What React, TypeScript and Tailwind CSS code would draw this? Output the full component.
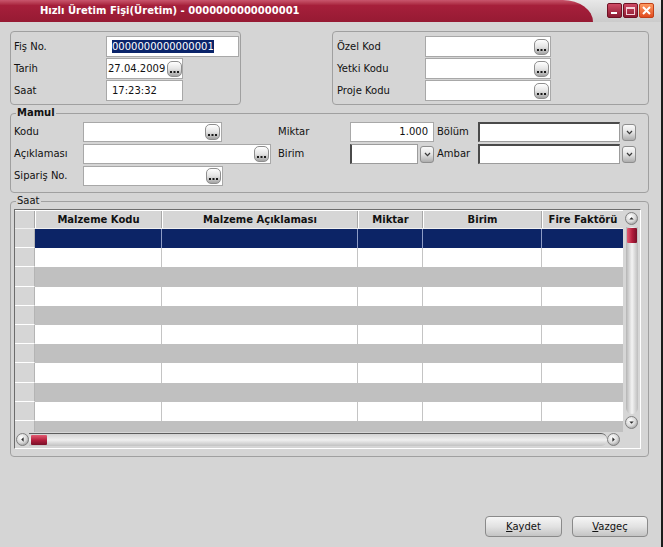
import React from "react";

function Dots() {
  return (
    <span className="flex h-[16px] w-[15px] shrink-0 items-end justify-center rounded-[5px] border border-[#8e8e8e] bg-linear-to-b from-[#ffffff] via-[#e4e4e4] to-[#a4a4a4] pb-[3px]">
      <svg width="9" height="2" viewBox="0 0 9 2">
        <rect x="0" y="0" width="2" height="2" fill="#1a1a1a" />
        <rect x="3.5" y="0" width="2" height="2" fill="#1a1a1a" />
        <rect x="7" y="0" width="2" height="2" fill="#1a1a1a" />
      </svg>
    </span>
  );
}

function Drop() {
  return (
    <span className="flex h-[17px] w-[14px] shrink-0 items-center justify-center rounded-[3px] border border-[#8e8e8e] bg-linear-to-b from-[#fafafa] via-[#e2e2e2] to-[#adadad]">
      <svg width="7" height="5" viewBox="0 0 7 5">
        <path d="M1 1 L3.5 3.6 L6 1" stroke="#3a3a3a" strokeWidth="1.3" fill="none" />
      </svg>
    </span>
  );
}

function CircleArrow({ dir }: { dir: "up" | "down" | "left" | "right" }) {
  const tri: Record<string, string> = {
    up: "M4.3 7.6 L6.5 5.2 L8.7 7.6 Z",
    down: "M4.3 5.4 L6.5 7.8 L8.7 5.4 Z",
    left: "M7.6 4.3 L5.2 6.5 L7.6 8.7 Z",
    right: "M5.4 4.3 L7.8 6.5 L5.4 8.7 Z",
  };
  return (
    <svg width="13" height="13" viewBox="0 0 13 13" className="shrink-0">
      <defs>
        <radialGradient id="cg" cx="0.4" cy="0.35" r="0.7">
          <stop offset="0" stopColor="#ffffff" />
          <stop offset="0.6" stopColor="#d8d8d8" />
          <stop offset="1" stopColor="#9a9a9a" />
        </radialGradient>
      </defs>
      <circle cx="6.5" cy="6.5" r="6" fill="url(#cg)" stroke="#808080" strokeWidth="1" />
      <path d={tri[dir]} fill="#2a2a2a" />
    </svg>
  );
}

const headers = ["Malzeme Kodu", "Malzeme Açıklaması", "Miktar", "Birim", "Fire Faktörü"];
const colW = ["w-[127px]", "w-[196px]", "w-[65px]", "w-[119px]", "w-[81px]"];

function GridRow({ i }: { i: number }) {
  const kind = i === 0 ? "sel" : i % 2 === 1 ? "white" : "gray";
  const bg = kind === "sel" ? "bg-[#0c2466]" : kind === "white" ? "bg-white" : "bg-[#c0c0c0]";
  const line =
    kind === "sel" ? "border-[#8d9cc6]" : kind === "white" ? "border-[#c4c4c4]" : "border-[#c0c0c0]";
  return (
    <div className="flex h-[19.2px] shrink-0">
      <div className="w-[20px] shrink-0 border-r border-b border-r-[#b4b4b4] border-b-white bg-[#d6d6d6]" />
      {colW.map((w, k) => (
        <div key={k} className={`${w} shrink-0 ${bg} ${k < 4 ? "border-r" : ""} ${line}`} />
      ))}
    </div>
  );
}

export default function App() {
  return (
    <div className="flex h-[547px] w-[663px] flex-col overflow-hidden border-r-2 border-[#1c1c1c] bg-[#d5d5d5] font-['DejaVu_Sans',sans-serif] text-[10px] leading-[12px] text-[#111]">
      {/* Title bar */}
      <div className="flex h-[22px] shrink-0 bg-linear-to-b from-[#e8e8e8] to-[#cbcbcb]">
        <div className="flex w-[593px] items-center rounded-tr-[30px_22px] bg-linear-to-b from-[#c9556d] from-0% via-[#a61f3b] via-25% to-[#961a33] pl-[40px] font-bold text-white">
          Hızlı Üretim Fişi(Üretim) - 0000000000000001
        </div>
        <div className="flex flex-1 items-start justify-end gap-[1px] pt-[3px] pr-[7px]">
          <div className="flex h-[15px] w-[15px] items-end rounded-[2px] border border-[#6e1224] bg-linear-to-b from-[#cf4a64] to-[#8c1a32] pb-[3px] pl-[3px]">
            <div className="h-[2px] w-[6px] bg-white" />
          </div>
          <div className="flex h-[15px] w-[15px] items-center justify-center rounded-[2px] border border-[#6e1224] bg-linear-to-b from-[#cf4a64] to-[#8c1a32]">
            <div className="h-[8px] w-[9px] border border-t-2 border-[#f4d0d8]" />
          </div>
          <div className="flex h-[15px] w-[15px] items-center justify-center rounded-[2px] border border-[#c04018] bg-linear-to-b from-[#ff9a60] to-[#e04a1c]">
            <svg width="9" height="9" viewBox="0 0 9 9">
              <path d="M1 1 L8 8 M8 1 L1 8" stroke="#fff" strokeWidth="2" />
            </svg>
          </div>
        </div>
      </div>

      {/* Body */}
      <div className="flex flex-1 flex-col pr-[12px] pl-[10px]">
        {/* Top boxes */}
        <div className="mt-[9px] flex h-[74px] justify-between">
          <div className="flex h-[74px] w-[231px] flex-col gap-[1px] rounded-[4px] border border-[#a0a0a0] pt-[4px] pl-[3px]">
            <div className="flex h-[21px] items-center">
              <span className="w-[92px]">Fiş No.</span>
              <div className="flex h-[21px] w-[133px] items-center border border-[#a8a8a8] bg-white pl-[5px]">
                <span className="inline-block bg-[#0a246a] leading-[13px] text-white">0000000000000001</span>
              </div>
            </div>
            <div className="flex h-[21px] items-center">
              <span className="w-[92px]">Tarih</span>
              <div className="flex h-[21px] w-[77px] items-center justify-between border border-[#a8a8a8] bg-white pr-[0px] pl-[1px]">
                <span>27.04.2009</span>
                <Dots />
              </div>
            </div>
            <div className="flex h-[21px] items-center">
              <span className="w-[92px]">Saat</span>
              <div className="flex h-[21px] w-[77px] items-center border border-[#a8a8a8] bg-white pl-[5px]">
                <span>17:23:32</span>
              </div>
            </div>
          </div>

          <div className="flex h-[74px] w-[317px] flex-col gap-[1px] rounded-[4px] border border-[#a0a0a0] pt-[4px] pl-[4px]">
            {["Özel Kod", "Yetki Kodu", "Proje Kodu"].map((l) => (
              <div key={l} className="flex h-[21px] items-center">
                <span className="w-[88px]">{l}</span>
                <div className="flex h-[21px] w-[126px] items-center justify-end border border-[#a8a8a8] bg-white pr-[1px]">
                  <Dots />
                </div>
              </div>
            ))}
          </div>
        </div>

        {/* Mamul */}
        <fieldset className="mt-[2px] h-[86px] rounded-[4px] border border-[#a0a0a0]">
          <legend className="ml-[5px] px-[1px] leading-[12px] font-bold">Mamul</legend>
          <div className="mt-[3px] grid grid-cols-[69px_195px_72px_87px_41px_159px] grid-rows-[20px_20px_20px] items-center gap-y-[2px] pl-[3px]">
            <span>Kodu</span>
            <div className="flex h-[20px] w-[139px] items-center justify-end border border-[#a8a8a8] bg-white pr-[1px]">
              <Dots />
            </div>
            <span>Miktar</span>
            <div className="flex h-[20px] w-[84px] items-center justify-end border border-[#a8a8a8] bg-white pr-[5px]">
              1.000
            </div>
            <span>Bölüm</span>
            <div className="flex items-center gap-[2px]">
              <div className="h-[20px] w-[142px] border border-t-2 border-l-2 border-[#9c9c9c] border-t-[#4a4a4a] border-l-[#4a4a4a] bg-white" />
              <Drop />
            </div>

            <span>Açıklaması</span>
            <div className="flex h-[20px] w-[188px] items-center justify-end border border-[#a8a8a8] bg-white pr-[1px]">
              <Dots />
            </div>
            <span>Birim</span>
            <div className="flex items-center gap-[2px]">
              <div className="h-[20px] w-[68px] border border-l-2 border-[#9c9c9c] border-l-[#4a4a4a] bg-white" />
              <Drop />
            </div>
            <span>Ambar</span>
            <div className="flex items-center gap-[2px]">
              <div className="h-[20px] w-[142px] border border-t-2 border-l-2 border-[#9c9c9c] border-t-[#4a4a4a] border-l-[#4a4a4a] bg-white" />
              <Drop />
            </div>

            <span>Sipariş No.</span>
            <div className="flex h-[20px] w-[140px] items-center justify-end border border-[#a8a8a8] bg-white pr-[1px]">
              <Dots />
            </div>
            <span />
            <span />
            <span />
            <span />
          </div>
        </fieldset>

        {/* Saat grid */}
        <fieldset className="mt-[2px] h-[262px] rounded-[4px] border border-[#a0a0a0]">
          <legend className="ml-[5px] px-[1px] leading-[12px]">Saat</legend>
          <div className="mt-[2px] ml-[3px] flex h-[240px] w-[627px] border border-t-[#6c6c6c] border-l-[#6c6c6c] border-r-white border-b-white">
            <div className="flex w-[608px] flex-col">
              {/* header */}
              <div className="flex h-[19px] shrink-0 border-t border-b border-t-white border-b-[#f0f0f0] bg-[#d6d6d6]">
                <div className="w-[20px] shrink-0 border-r border-[#a8a8a8]" />
                {headers.map((h, k) => (
                  <div
                    key={h}
                    className={`${colW[k]} flex shrink-0 items-center justify-center border-l border-l-white font-bold text-[#111] ${k < 4 ? "border-r border-r-[#a8a8a8]" : ""}`}
                  >
                    {h}
                  </div>
                ))}
              </div>
              {/* rows */}
              <div className="flex h-[203px] shrink-0 flex-col overflow-hidden">
                {Array.from({ length: 11 }).map((_, i) => (
                  <GridRow key={i} i={i} />
                ))}
              </div>
              {/* h-scroll */}
              <div className="flex h-[15px] shrink-0 items-center bg-[#d6d6d6] pl-[1px]">
                <CircleArrow dir="left" />
                <div className="flex h-[13px] flex-1 items-center rounded-r-[6px] border-t border-[#5c5c5c] bg-linear-to-b from-[#d2d2d2] via-[#efefef] to-[#c2c2c2] pl-[2px]">
                  <div className="h-[10px] w-[16px] rounded-[1px] bg-linear-to-b from-[#e25a72] via-[#b51f3e] to-[#781028]" />
                </div>
                <CircleArrow dir="right" />
                <div className="w-[3px]" />
              </div>
            </div>
            {/* v-scroll */}
            <div className="flex w-[17px] flex-col items-center bg-[#d6d6d6]">
              <div className="flex h-[17px] shrink-0 items-center justify-center">
                <CircleArrow dir="up" />
              </div>
              <div className="flex w-[12px] flex-1 flex-col items-center rounded-b-[6px] bg-linear-to-r from-[#b4b4b4] via-[#f4f4f4] to-[#bdbdbd] pt-[1px]">
                <div className="h-[15px] w-[10px] rounded-[1px] bg-linear-to-r from-[#e25a72] via-[#b51f3e] to-[#781028]" />
              </div>
              <div className="flex h-[17px] shrink-0 items-center justify-center">
                <CircleArrow dir="down" />
              </div>
              <div className="h-[17px] shrink-0" />
            </div>
          </div>
        </fieldset>

        {/* Buttons */}
        <div className="mt-[59px] flex justify-end gap-[10px] pr-[1px]">
          <button className="flex h-[21px] w-[77px] items-center justify-center rounded-[4px] border border-[#8a8a8a] bg-linear-to-b from-[#f6f6f6] via-[#e2e2e2] to-[#c4c4c4] text-[#111]">
            <span>
              <span className="underline">K</span>aydet
            </span>
          </button>
          <button className="flex h-[21px] w-[76px] items-center justify-center rounded-[4px] border border-[#8a8a8a] bg-linear-to-b from-[#f6f6f6] via-[#e2e2e2] to-[#c4c4c4] text-[#111]">
            <span>
              <span className="underline">V</span>azgeç
            </span>
          </button>
        </div>
      </div>
    </div>
  );
}
